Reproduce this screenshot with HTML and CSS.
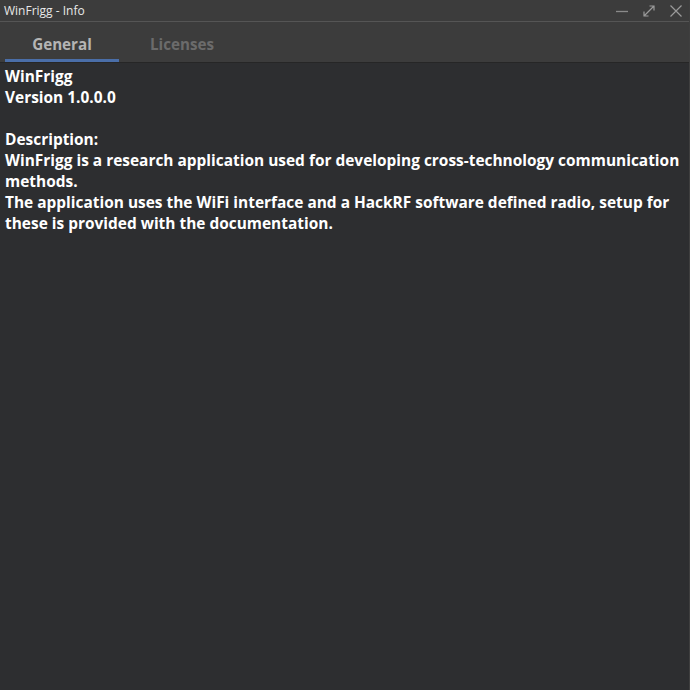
FILE: index.html
```html
<!DOCTYPE html>
<html>
<head>
<meta charset="utf-8">
<link rel="stylesheet" href="styles.css">
</head>
<body>
<div class="window">
  <div class="titlebar">
    <span class="title">WinFrigg - Info</span>
    <div class="controls">
      <svg class="ctl" width="14" height="14" viewBox="0 0 14 14"><path d="M1 7.5H13" stroke="#8a8a8a" stroke-width="1.3"/></svg>
      <svg class="ctl" width="14" height="14" viewBox="0 0 14 14"><path d="M2 12L12 2M7.5 2H12V6.5M2 7.5V12H6.5" stroke="#9a9a9a" stroke-width="1.2" fill="none"/></svg>
      <svg class="ctl" width="14" height="14" viewBox="0 0 14 14"><path d="M1.5 1.5L12.5 12.5M12.5 1.5L1.5 12.5" stroke="#9a9a9a" stroke-width="1.2"/></svg>
    </div>
  </div>
  <div class="tabs">
    <div class="tab active">General</div>
    <div class="tab">Licenses</div>
  </div>
  <div class="content">
    <p>WinFrigg<br>Version 1.0.0.0<br><br>Description:<br>WinFrigg is a research application used for developing cross-technology communication methods.<br>The application uses the WiFi interface and a HackRF software defined radio, setup for these is provided with the documentation.</p>
  </div>
</div>
</body>
</html>
```
FILE: styles.css
```css
html, body {
  margin: 0;
  padding: 0;
  background: #2d2e30;
}
.window {
  width: 690px;
  height: 690px;
  display: flex;
  flex-direction: column;
  background: #2d2e30;
  box-sizing: border-box;
  border-right: 1px solid #3f3f3f;
}
.titlebar {
  height: 21px;
  background: #3c3c3c;
  border-bottom: 1px solid #555555;
  display: flex;
  align-items: center;
  justify-content: space-between;
  padding-left: 4px;
  flex-shrink: 0;
}
.title {
  font-family: "Open Sans", sans-serif;
  font-size: 12px;
  color: #e8e8e8;
}
.controls {
  display: flex;
  gap: 13px;
  padding-right: 6px;
  align-items: center;
}
.ctl { display: block; }
.tabs {
  height: 40px;
  background: #3c3c3c;
  display: flex;
  gap: 6px;
  padding-left: 5px;
  border-bottom: 1px solid #262626;
  flex-shrink: 0;
}
.tab {
  width: 114px;
  display: flex;
  align-items: center;
  justify-content: center;
  font-family: "Open Sans", sans-serif;
  font-weight: 700;
  font-size: 15.2px;
  color: #6b6b6b;
  box-sizing: border-box;
  padding-top: 6px;
  border-bottom: 3px solid transparent;
}
.tab.active {
  color: #b4b4b4;
  border-bottom-color: #4a6ea8;
}
.content {
  padding: 3px 5px;
}
.content p {
  margin: 0;
  font-family: "Open Sans", sans-serif;
  font-weight: 700;
  font-size: 15.45px;
  line-height: 21px;
  color: #ffffff;
}
```
